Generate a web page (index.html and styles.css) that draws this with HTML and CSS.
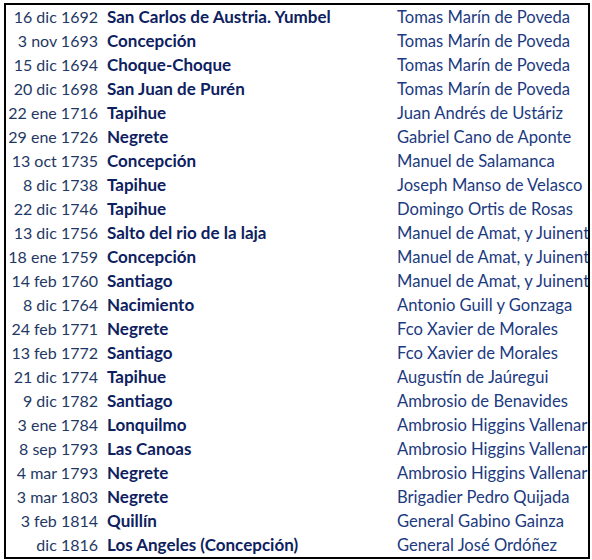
FILE: index.html
```html
<!DOCTYPE html>
<html>
<head>
<meta charset="utf-8">
<link rel="stylesheet" href="styles.css">
</head>
<body>
<div class="frame">
  <div class="row"><span class="date">16 dic 1692</span><span class="place">San Carlos de Austria. Yumbel</span><span class="name">Tomas Marín de Poveda</span></div>
  <div class="row"><span class="date">3 nov 1693</span><span class="place">Concepción</span><span class="name">Tomas Marín de Poveda</span></div>
  <div class="row"><span class="date">15 dic 1694</span><span class="place">Choque-Choque</span><span class="name">Tomas Marín de Poveda</span></div>
  <div class="row"><span class="date">20 dic 1698</span><span class="place">San Juan de Purén</span><span class="name">Tomas Marín de Poveda</span></div>
  <div class="row"><span class="date">22 ene 1716</span><span class="place">Tapihue</span><span class="name">Juan Andrés de Ustáriz</span></div>
  <div class="row"><span class="date">29 ene 1726</span><span class="place">Negrete</span><span class="name">Gabriel Cano de Aponte</span></div>
  <div class="row"><span class="date">13 oct 1735</span><span class="place">Concepción</span><span class="name">Manuel de Salamanca</span></div>
  <div class="row"><span class="date">8 dic 1738</span><span class="place">Tapihue</span><span class="name">Joseph Manso de Velasco</span></div>
  <div class="row"><span class="date">22 dic 1746</span><span class="place">Tapihue</span><span class="name">Domingo Ortis de Rosas</span></div>
  <div class="row"><span class="date">13 dic 1756</span><span class="place">Salto del rio de la laja</span><span class="name">Manuel de Amat, y Juinent</span></div>
  <div class="row"><span class="date">18 ene 1759</span><span class="place">Concepción</span><span class="name">Manuel de Amat, y Juinent</span></div>
  <div class="row"><span class="date">14 feb 1760</span><span class="place">Santiago</span><span class="name">Manuel de Amat, y Juinent</span></div>
  <div class="row"><span class="date">8 dic 1764</span><span class="place">Nacimiento</span><span class="name">Antonio Guill y Gonzaga</span></div>
  <div class="row"><span class="date">24 feb 1771</span><span class="place">Negrete</span><span class="name">Fco Xavier de Morales</span></div>
  <div class="row"><span class="date">13 feb 1772</span><span class="place">Santiago</span><span class="name">Fco Xavier de Morales</span></div>
  <div class="row"><span class="date">21 dic 1774</span><span class="place">Tapihue</span><span class="name">Augustín de Jaúregui</span></div>
  <div class="row"><span class="date">9 dic 1782</span><span class="place">Santiago</span><span class="name">Ambrosio de Benavides</span></div>
  <div class="row"><span class="date">3 ene 1784</span><span class="place">Lonquilmo</span><span class="name">Ambrosio Higgins Vallenar</span></div>
  <div class="row"><span class="date">8 sep 1793</span><span class="place">Las Canoas</span><span class="name">Ambrosio Higgins Vallenar</span></div>
  <div class="row"><span class="date">4 mar 1793</span><span class="place">Negrete</span><span class="name">Ambrosio Higgins Vallenar</span></div>
  <div class="row"><span class="date">3 mar 1803</span><span class="place">Negrete</span><span class="name">Brigadier Pedro Quijada</span></div>
  <div class="row"><span class="date">3 feb 1814</span><span class="place">Quillín</span><span class="name">General Gabino Gainza</span></div>
  <div class="row"><span class="date">dic 1816</span><span class="place">Los Angeles (Concepción)</span><span class="name">General José Ordóñez</span></div>
</div>
</body>
</html>
```
FILE: styles.css
```css
html, body {
  margin: 0;
  padding: 0;
  background: #ffffff;
}
body {
  padding: 3px 0 0 4px;
  font-family: Lato, "Open Sans", sans-serif;
  font-size: 17px;
  color: #1f3864;
}
.frame {
  width: 582px;
  border: 2px solid #000000;
  overflow: hidden;
}
.row {
  display: grid;
  grid-template-columns: 92px 299px 191px;
  height: 24px;
  line-height: 24px;
  white-space: nowrap;
}
.date {
  text-align: right;
  font-size: 16px;
}
.place {
  font-weight: 700;
  color: #0d2160;
  padding-left: 9px;
  overflow: hidden;
}
.name {
  font-size: 16.6px;
  color: #1c3a80;
  overflow: hidden;
}
```
